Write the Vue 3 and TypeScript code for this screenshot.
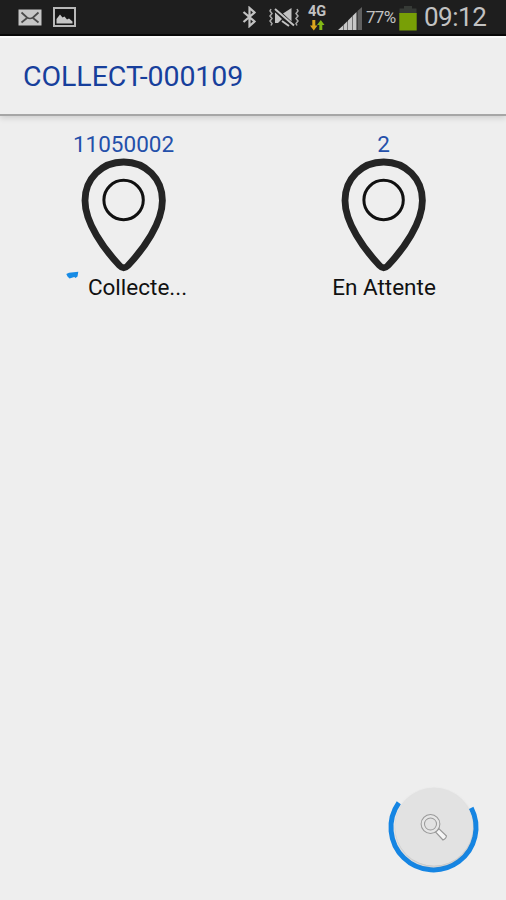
<script setup lang="ts">
interface Counter {
  value: string
  label: string
  marked: boolean
}

const title = 'COLLECT-000109'
const counters: Counter[] = [
  { value: '11050002', label: 'Collecte...', marked: true },
  { value: '2', label: 'En Attente', marked: false },
]
</script>

<template>
  <div class="screen">
    <header class="status">
      <svg class="mail" width="24" height="17" viewBox="0 0 24 17">
        <rect x="0.5" y="0.5" width="23" height="16" fill="#c6c6c6" />
        <path d="M3.500 3.500 L9 8.500 Q12 10.500 15 8.500 L20.500 3.500 M3.500 13.500 L9 9 M20.500 13.500 L15 9" fill="none" stroke="#4a4a4a" stroke-width="1.700" />
      </svg>
      <svg class="photo" width="23" height="20" viewBox="0 0 23 20">
        <rect x="1" y="1" width="21" height="18" fill="#171717" stroke="#b8b8b8" stroke-width="2" />
        <path d="M3.500 16.500 V12 L7 7.500 L9.500 10.500 L11.500 9.500 L14 12.500 L16 11.500 L19.500 14.500 V16.500 Z" fill="#c6c6c6" />
      </svg>
      <span class="spacer"></span>
      <svg class="bluetooth" width="15" height="22" viewBox="0 0 15 22">
        <path d="M1.500 6 L12.500 15.500 L7.500 20 V2 L12.500 6.500 L1.500 16" fill="none" stroke="#c2c2c2" stroke-width="2.200" />
      </svg>
      <svg class="mute" width="30" height="22" viewBox="0 0 30 22">
        <path d="M2 2 l-1 2 l2 2.500 l-2 2.500 l2 2.500 l-2 2.500 l2 2.500 l-1 2 M28 2 l1 2 l-2 2.500 l2 2.500 l-2 2.500 l2 2.500 l-2 2.500 l1 2" fill="none" stroke="#aaa" stroke-width="1.500" />
        <path d="M6 5 V16 H9 L13 12 Z M14 6.500 L22.500 1 V14.500 Z" fill="#c2c2c2" />
        <path d="M6 3 L25 19" stroke="#1e1e1e" stroke-width="3.500" />
        <path d="M6 2 L25 18.500 M13 14 L20 19" fill="none" stroke="#c2c2c2" stroke-width="2" />
      </svg>
      <span class="network">
        <b>4G</b>
        <svg width="15" height="11" viewBox="0 0 15 11">
          <path d="M2.300 0 H5.300 V5.500 H7.500 L3.800 10.500 L0 5.500 H2.300 Z" fill="#dca51e" />
          <path d="M9.300 10 H12.300 V5 H14.500 L10.800 0 L7 5 H9.300 Z" fill="#83b916" />
        </svg>
      </span>
      <svg class="signal" width="25" height="24" viewBox="0 0 25 24">
        <path d="M0 23 L5 18.500 V23 Z M5.500 18 L9.500 14 V23 H5.500 Z M10 13.500 L14 9.500 V23 H10 Z M14.500 9 L18.500 5 V23 H14.500 Z" fill="#c7c7c7" />
        <path d="M19.500 4 L24 0 V23 H19.500 Z" fill="#606060" />
      </svg>
      <span class="percent">77%</span>
      <svg class="battery" width="18" height="26" viewBox="0 0 18 26">
        <path d="M5 1 H13 V3.500 H17.500 V9 H0.500 V3.500 H5 Z" fill="#363a36" />
        <rect x="0.300" y="8" width="17.400" height="17.500" fill="#789f06" />
      </svg>
      <time class="clock">09:12</time>
    </header>

    <div class="appbar"><h1>{{ title }}</h1></div>

    <main class="grid">
      <section v-for="item in counters" :key="item.label" class="counter">
        <span class="value">{{ item.value }}</span>
        <svg class="pin" width="86" height="114" viewBox="0 0 86 114">
          <path d="M42.700 4 C20.500 4 4 21 4 42.500 C4 65 23 91 38.500 107.500 Q42.700 112 47 107.500 C62.500 91 81.400 65 81.400 42.500 C81.400 21 65 4 42.700 4 Z" fill="none" stroke="#242424" stroke-width="6.800" />
          <circle cx="42.600" cy="42" r="19.700" fill="none" stroke="#111" stroke-width="3" />
        </svg>
        <span class="label">{{ item.label }}</span>
        <svg v-if="item.marked" class="mark" width="13" height="9" viewBox="0 0 13 9">
          <path d="M0.300 3 L3 1.800 L12.300 0.700 L11.500 5.500 L9.500 7 L8.300 6 L3.500 7.500 L1.500 5.500 Z" fill="#178be5" />
        </svg>
      </section>
    </main>

    <button class="fab" aria-label="Rechercher">
      <svg width="96" height="96" viewBox="0 0 96 96">
        <defs>
          <filter id="soft" x="-20%" y="-20%" width="140%" height="140%">
            <feGaussianBlur stdDeviation="1.500" />
          </filter>
        </defs>
        <path d="M12.800 22.800 A42.500 42.500 0 1 0 85.200 27.800" fill="none" stroke="#1585e3" stroke-width="5" />
        <circle cx="48" cy="48" r="38.500" fill="#777" opacity="0.550" filter="url(#soft)" />
        <circle cx="48" cy="46.800" r="39" fill="#e2e2e2" />
        <path d="M49.500 52 L53 48.800 L60.500 56 Q60 59 57 60 Z" fill="#f6f6f6" stroke="#989898" stroke-width="1.100" />
        <circle cx="44.500" cy="44" r="7.700" fill="none" stroke="#999" stroke-width="4.400" />
        <circle cx="44.500" cy="44" r="7.700" fill="none" stroke="#e6e6e6" stroke-width="2.400" />
      </svg>
    </button>
  </div>
</template>

<style>
body {
  margin: 0;
  background: #eee;
}
</style>

<style scoped>
.screen {
  position: relative;
  width: 506px;
  height: 900px;
  overflow: hidden;
  background: #eee;
  color: #111;
  font-family: Roboto, "Liberation Sans", sans-serif;
}
svg {
  display: block;
  flex: none;
}
.status {
  display: flex;
  align-items: flex-start;
  box-sizing: border-box;
  height: 36px;
  padding: 0 19px 0 18px;
  background: #1e1e1e;
  border-bottom: 2px solid #090909;
  color: #c2c2c2;
}
.mail { margin-top: 9px; }
.photo { margin: 7px 0 0 11px; }
.spacer { flex: 1; }
.bluetooth { margin: 6px 12px 0 0; }
.mute { margin: 7px 9px 0 0; }
.network {
  width: 20px;
  margin: 5px 10px 0 0;
}
.network b {
  display: block;
  height: 15px;
  font-size: 14.500px;
  line-height: 14px;
}
.network svg { margin-left: 2px; }
.signal { margin: 7px 3px 0 0; }
.percent {
  width: 31px;
  margin-right: 2px;
  font-size: 17px;
  line-height: 35px;
  letter-spacing: -0.700px;
}
.battery { margin: 5px 7px 0 0; }
.clock {
  width: 63px;
  font-size: 26px;
  line-height: 35px;
  letter-spacing: -0.500px;
  white-space: nowrap;
}
.appbar {
  box-sizing: border-box;
  height: 80px;
  padding: 0 23px;
  border-top: 2px solid #fafafa;
  border-bottom: 2px solid #a6a6a6;
  box-shadow: 0 2px 6px rgba(0, 0, 0, 0.14);
}
.appbar h1 {
  margin: 0;
  color: #173f9c;
  font-size: 28.500px;
  font-weight: 400;
  letter-spacing: -0.050px;
  line-height: 77px;
}
.grid {
  display: grid;
  grid-template-columns: 260px 260px;
  padding-top: 16px;
  margin-left: -6px;
}
.counter {
  position: relative;
  display: flex;
  flex-direction: column;
  align-items: center;
}
.value {
  height: 26px;
  margin-left: -1px;
  color: #2450aa;
  font-size: 22.500px;
  line-height: 25px;
}
.label {
  height: 28px;
  font-size: 22.500px;
  line-height: 30px;
}
.counter:first-child .label { margin-left: 27px; }
.mark {
  position: absolute;
  left: 72px;
  top: 139px;
}
.fab {
  position: absolute;
  left: 386px;
  top: 780px;
  padding: 0;
  border: 0;
  background: none;
}
</style>
